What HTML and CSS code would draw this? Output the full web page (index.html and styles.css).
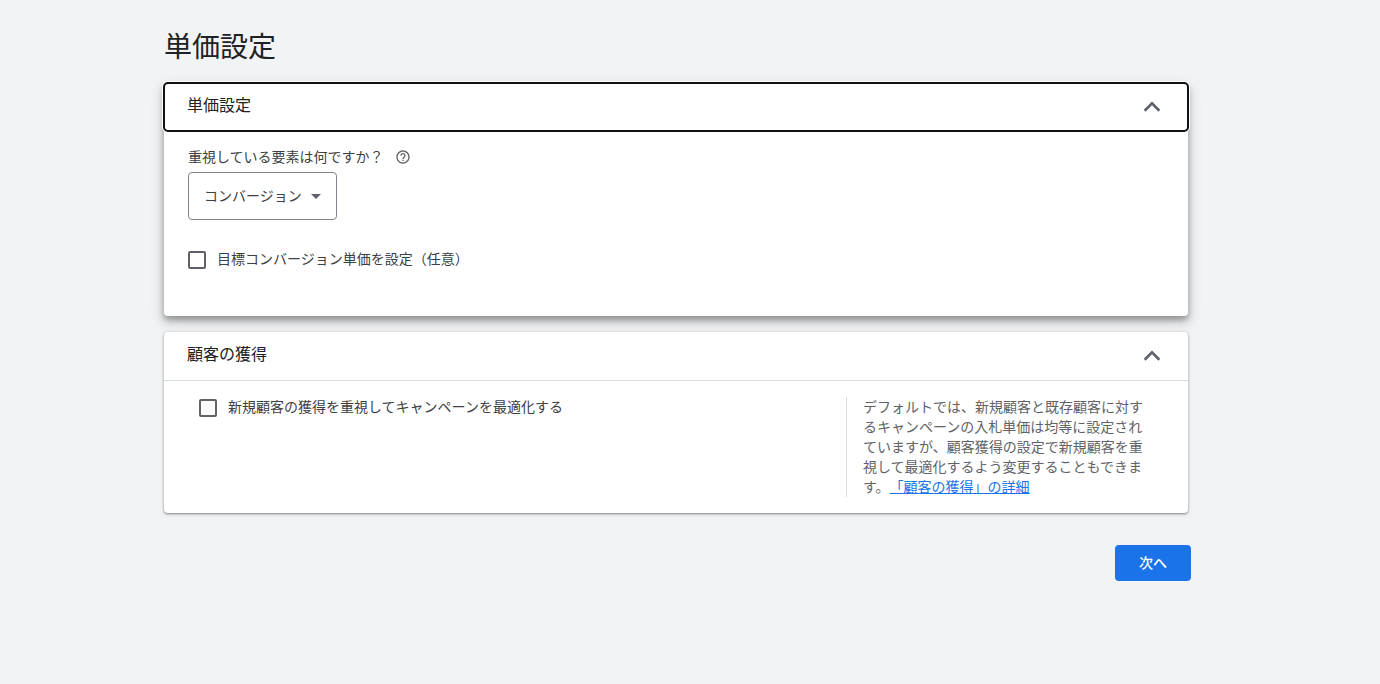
FILE: index.html
```html
<!DOCTYPE html>
<html lang="ja">
<head>
<meta charset="utf-8">
<title>単価設定</title>
<link rel="stylesheet" href="styles.css">
</head>
<body>
<main class="page">
  <h1 class="page-title">単価設定</h1>

  <section class="card card-active">
    <h2 class="card-heading">
      <button class="card-header card-header-focused" type="button" aria-expanded="true">
        <span>単価設定</span>
        <svg class="chevron" viewBox="0 0 24 24" aria-hidden="true"><path d="M12 6.500l-8.300 8.300 1.900 1.900 6.400-6.400 6.400 6.400 1.900-1.900z"/></svg>
      </button>
    </h2>
    <div class="bidding">
      <div class="question">
        <label for="focus">重視している要素は何ですか？</label>
        <button class="help" type="button" aria-label="ヘルプ">
          <svg viewBox="0 0 24 24" aria-hidden="true"><path d="M11 18h2v-2h-2v2zm1-16C6.480 2 2 6.480 2 12s4.480 10 10 10 10-4.480 10-10S17.520 2 12 2zm0 18c-4.410 0-8-3.590-8-8s3.590-8 8-8 8 3.590 8 8-3.590 8-8 8zm0-14c-2.210 0-4 1.790-4 4h2c0-1.100.9-2 2-2s2 .9 2 2c0 2-3 1.750-3 5h2c0-2.250 3-2.500 3-5 0-2.210-1.790-4-4-4z"/></svg>
        </button>
      </div>
      <div class="dropdown">
        <select id="focus"><option>コンバージョン</option></select>
        <svg class="caret" viewBox="0 0 10 5" aria-hidden="true"><path d="M0 0h10L5 5z"/></svg>
      </div>
      <label class="check"><input type="checkbox"><span>目標コンバージョン単価を設定（任意）</span></label>
    </div>
  </section>

  <section class="card">
    <h2 class="card-heading card-heading-divided">
      <button class="card-header" type="button" aria-expanded="true">
        <span>顧客の獲得</span>
        <svg class="chevron" viewBox="0 0 24 24" aria-hidden="true"><path d="M12 6.500l-8.300 8.300 1.900 1.900 6.400-6.400 6.400 6.400 1.900-1.900z"/></svg>
      </button>
    </h2>
    <div class="acquisition">
      <label class="check"><input type="checkbox"><span>新規顧客の獲得を重視してキャンペーンを最適化する</span></label>
      <aside class="note">デフォルトでは、新規顧客と既存顧客に対するキャンペーンの入札単価は均等に設定されていますが、顧客獲得の設定で新規顧客を重視して最適化するよう変更することもできます。<a href="#">「顧客の獲得」の詳細</a></aside>
    </div>
  </section>
</main>
<footer class="actions"><button class="next" type="button">次へ</button></footer>
</body>
</html>
```
FILE: styles.css
```css
* {
  box-sizing: border-box;
}

body {
  margin: 0;
  background: #f1f3f4;
  color: #3c4043;
  font: 14px/20px "Liberation Sans", "Noto Sans CJK JP", sans-serif;
  text-spacing-trim: space-all;
}

button,
select {
  font: inherit;
  color: inherit;
}

.page {
  display: flex;
  flex-direction: column;
  gap: 16px;
  padding: 28px 192px 0 164px;
}

.page-title {
  margin: 0;
  color: #202124;
  font-size: 28px;
  font-weight: 400;
  line-height: 39px;
}

.card {
  border-radius: 4px;
  background: #fff;
  box-shadow: 0 1px 2px rgba(60, 64, 67, 0.5), 0 1px 4px rgba(60, 64, 67, 0.2);
}

.card-active {
  box-shadow: 0 4px 6px rgba(0, 0, 0, 0.32), 0 5px 14px 2px rgba(0, 0, 0, 0.14);
}

.card-heading {
  margin: 0;
  font-size: 16px;
  font-weight: 400;
  line-height: 24px;
}

.card-heading-divided {
  border-bottom: 1px solid #dadce0;
}

.card-header {
  display: flex;
  align-items: center;
  justify-content: space-between;
  width: 100%;
  height: 48px;
  padding: 0 24px 0 23px;
  border: 0;
  border-radius: 4px;
  background: none;
  color: #202124;
}

.card-header span {
  padding-bottom: 2px;
}

.card-header-focused {
  outline: 2px solid #101010;
  outline-offset: -1px;
  box-shadow: 0 0 0 2px #fff;
}

.chevron {
  width: 24px;
  height: 24px;
  fill: #5f6368;
}

.bidding {
  padding: 15px 24px 45px;
}

.question {
  display: flex;
  gap: 11px;
  align-items: center;
  height: 22px;
  margin-bottom: 4px;
}

.help {
  display: flex;
  padding: 0;
  border: 0;
  background: none;
}

.help svg {
  width: 16px;
  height: 16px;
  fill: #5f6368;
}

.dropdown {
  display: grid;
  align-items: center;
  width: fit-content;
  margin-bottom: 29px;
}

.dropdown > * {
  grid-area: 1 / 1;
}

.dropdown select {
  height: 48px;
  padding: 0 34px 0 15px;
  border: 1px solid #80868b;
  border-radius: 4px;
  background: #fff;
  appearance: none;
}

.caret {
  justify-self: end;
  width: 10px;
  height: 5px;
  margin-right: 16px;
  fill: #5f6368;
  pointer-events: none;
}

.check {
  display: flex;
  align-items: center;
  gap: 11px;
  height: 22px;
}

.check span {
  padding-bottom: 2px;
}

.check input {
  width: 18px;
  height: 18px;
  margin: 0;
  border: 2px solid #5f6368;
  border-radius: 2px;
  background: #fff;
  appearance: none;
}

.check input:checked {
  background: #1a73e8;
}

.acquisition {
  display: flex;
  justify-content: space-between;
  padding: 16px 24px 16px 35px;
}

.note {
  width: 318px;
  padding: 0 16px;
  border-left: 1px solid #dadce0;
  color: #5f6368;
}

.note a {
  color: #1a73e8;
}

.actions {
  display: flex;
  justify-content: flex-end;
  padding: 32px 189px 32px 164px;
}

.next {
  width: 76px;
  height: 36px;
  border: 0;
  border-radius: 4px;
  background: #1a73e8;
  color: #fff;
  font-weight: 500;
}
```
